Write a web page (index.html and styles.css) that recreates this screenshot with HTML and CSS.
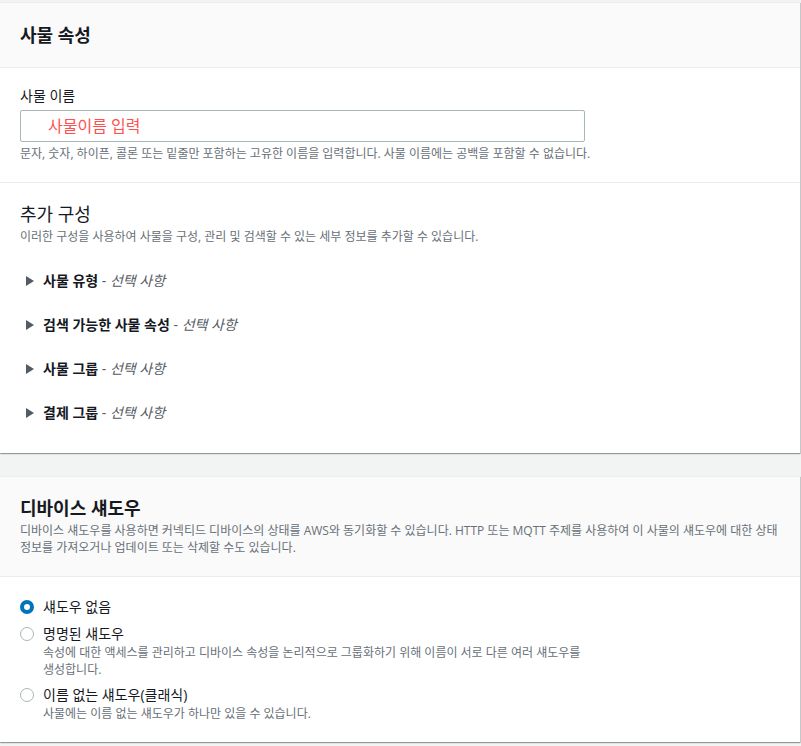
FILE: index.html
```html
<!DOCTYPE html>
<html lang="ko">

<head>
    <meta charset="UTF-8">
    <meta name="viewport" content="width=device-width, initial-scale=1.0">
    <title>사물 생성</title>
    <link rel="stylesheet" href="styles.css">
</head>

<body>
    <div class="page">
        <!-- 사물 속성 -->
        <section class="card">
            <header class="card-header">
                <h2>사물 속성</h2>
            </header>
            <div class="card-section">
                <label class="field-label" for="thingName">사물 이름</label>
                <input type="text" id="thingName" class="text-input" placeholder="사물이름 입력">
                <p class="hint">문자, 숫자, 하이픈, 콜론 또는 밑줄만 포함하는 고유한 이름을 입력합니다. 사물 이름에는 공백을 포함할 수 없습니다.</p>
            </div>
            <div class="card-section extra">
                <h3>추가 구성</h3>
                <p class="hint">이러한 구성을 사용하여 사물을 구성, 관리 및 검색할 수 있는 세부 정보를 추가할 수 있습니다.</p>
                <ul class="expand-list">
                    <li><span class="caret"></span><b>사물 유형</b> - <i>선택 사항</i></li>
                    <li><span class="caret"></span><b>검색 가능한 사물 속성</b> - <i>선택 사항</i></li>
                    <li><span class="caret"></span><b>사물 그룹</b> - <i>선택 사항</i></li>
                    <li><span class="caret"></span><b>결제 그룹</b> - <i>선택 사항</i></li>
                </ul>
            </div>
        </section>

        <!-- 디바이스 섀도우 -->
        <section class="card">
            <header class="card-header shadow-header">
                <h2>디바이스 섀도우</h2>
                <p class="hint">디바이스 섀도우를 사용하면 커넥티드 디바이스의 상태를 AWS와 동기화할 수 있습니다. HTTP 또는 MQTT 주제를 사용하여 이 사물의 섀도우에 대한 상태 정보를 가져오거나 업데이트 또는 삭제할 수도 있습니다.</p>
            </header>
            <div class="card-section radios">
                <label class="radio">
                    <span class="dot checked"></span>
                    <span class="radio-text">섀도우 없음</span>
                </label>
                <label class="radio">
                    <span class="dot"></span>
                    <span class="radio-text">명명된 섀도우
                        <small>속성에 대한 액세스를 관리하고 디바이스 속성을 논리적으로 그룹화하기 위해 이름이 서로 다른 여러 섀도우를 생성합니다.</small>
                    </span>
                </label>
                <label class="radio">
                    <span class="dot"></span>
                    <span class="radio-text">이름 없는 섀도우(클래식)
                        <small>사물에는 이름 없는 섀도우가 하나만 있을 수 있습니다.</small>
                    </span>
                </label>
            </div>
        </section>
    </div>
</body>

</html>
```

FILE: styles.css
```css
body {
    margin: 0;
    background: #f2f3f3;
    font-family: "Open Sans", "Noto Sans CJK KR", sans-serif;
    color: #16191f;
}

.page {
    padding-top: 2px;
    width: 800px;
}

.card {
    background: #fff;
    border-top: 1px solid #eaeded;
    box-shadow: 0 1px 1px 0 rgba(0, 28, 36, 0.3), 1px 1px 1px 0 rgba(0, 28, 36, 0.15);
    margin-bottom: 23px;
}

.card-header {
    background: #fafafa;
    border-bottom: 1px solid #eaeded;
    padding: 19px 20px;
}

.card-header h2 {
    margin: 0;
    font-size: 18px;
    line-height: 26px;
    font-weight: 700;
}

.shadow-header {
    padding: 18px 20px 20px;
}

.shadow-header .hint {
    margin-top: 1px;
    line-height: 17px;
}

.card-section {
    padding: 18px 20px 20px;
}

.card-section + .card-section {
    border-top: 1px solid #eaeded;
}

.field-label {
    display: block;
    font-size: 14px;
    line-height: 20px;
}

.text-input {
    display: block;
    box-sizing: border-box;
    width: 565px;
    height: 32px;
    margin-top: 4px;
    padding: 0 0 0 27px;
    border: 1px solid #aab7b8;
    border-radius: 2px;
    font-family: inherit;
    font-size: 16px;
}

.text-input::placeholder {
    color: #ff4f4f;
}

.hint {
    margin: 4px 0 0;
    font-size: 12px;
    line-height: 16px;
    color: #687078;
}

.extra {
    padding-bottom: 18px;
}

.extra h3 {
    margin: 0;
    font-size: 18px;
    line-height: 26px;
    font-weight: 400;
}

.extra .hint {
    margin-top: 2px;
}

.expand-list {
    list-style: none;
    margin: 14px 0 0;
    padding: 0;
}

.expand-list li {
    display: flex;
    align-items: center;
    padding: 12px 0;
    font-size: 14px;
    line-height: 20px;
    color: #545b64;
    white-space: pre;
}

.expand-list b {
    color: #16191f;
}

.expand-list i {
    color: #545b64;
}

.caret {
    width: 0;
    height: 0;
    margin: 0 9px 0 6px;
    border-top: 5px solid transparent;
    border-bottom: 5px solid transparent;
    border-left: 8px solid #545b64;
}

.radios {
    display: flex;
    flex-direction: column;
    gap: 7px;
    padding-top: 20px;
    padding-bottom: 20px;
}

.radio {
    display: flex;
    align-items: flex-start;
    font-size: 14px;
    line-height: 20px;
}

.dot {
    box-sizing: border-box;
    flex: none;
    width: 14px;
    height: 14px;
    margin: 3px 9px 0 0;
    border: 1px solid #aab7b8;
    border-radius: 50%;
    background: #fff;
}

.dot.checked {
    border: 4px solid #0073bb;
}

.radio-text small {
    display: block;
    max-width: 545px;
    font-size: 12px;
    line-height: 17px;
    color: #687078;
}
```
